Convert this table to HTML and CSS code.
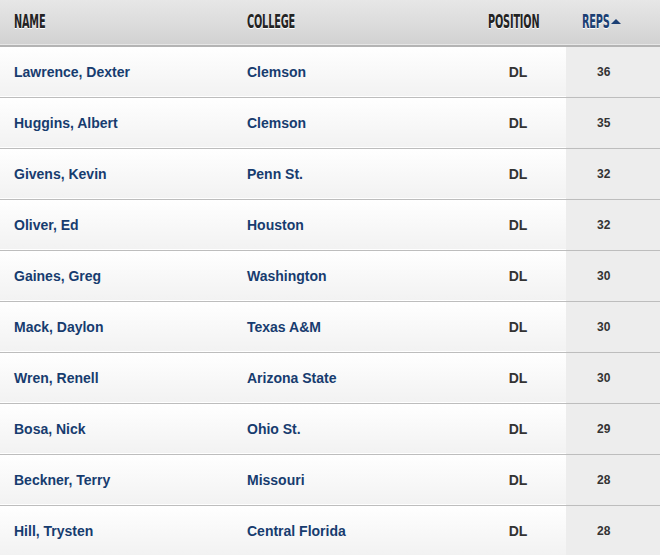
FILE: index.html
```html
<!DOCTYPE html>
<html>
<head>
<meta charset="utf-8">
<link rel="stylesheet" href="styles.css">
</head>
<body>
<table class="reps-table">
  <colgroup>
    <col class="c-name"><col class="c-college"><col class="c-pos"><col class="c-reps">
  </colgroup>
  <thead>
    <tr>
      <th class="h-name"><span class="hl">NAME</span></th>
      <th class="h-college"><span class="hl">COLLEGE</span></th>
      <th class="h-pos"><span class="hl">POSITION</span></th>
      <th class="h-reps"><span class="hl active">REPS</span><span class="caret"></span></th>
    </tr>
  </thead>
  <tbody>
    <tr><td class="name">Lawrence, Dexter</td><td class="college">Clemson</td><td class="pos">DL</td><td class="reps">36</td></tr>
    <tr><td class="name">Huggins, Albert</td><td class="college">Clemson</td><td class="pos">DL</td><td class="reps">35</td></tr>
    <tr><td class="name">Givens, Kevin</td><td class="college">Penn St.</td><td class="pos">DL</td><td class="reps">32</td></tr>
    <tr><td class="name">Oliver, Ed</td><td class="college">Houston</td><td class="pos">DL</td><td class="reps">32</td></tr>
    <tr><td class="name">Gaines, Greg</td><td class="college">Washington</td><td class="pos">DL</td><td class="reps">30</td></tr>
    <tr><td class="name">Mack, Daylon</td><td class="college">Texas A&amp;M</td><td class="pos">DL</td><td class="reps">30</td></tr>
    <tr><td class="name">Wren, Renell</td><td class="college">Arizona State</td><td class="pos">DL</td><td class="reps">30</td></tr>
    <tr><td class="name">Bosa, Nick</td><td class="college">Ohio St.</td><td class="pos">DL</td><td class="reps">29</td></tr>
    <tr><td class="name">Beckner, Terry</td><td class="college">Missouri</td><td class="pos">DL</td><td class="reps">28</td></tr>
    <tr><td class="name">Hill, Trysten</td><td class="college">Central Florida</td><td class="pos">DL</td><td class="reps">28</td></tr>
  </tbody>
</table>
</body>
</html>
```
FILE: styles.css
```css
html, body {
  margin: 0;
  padding: 0;
  background: #fff;
}
.reps-table {
  width: 660px;
  border-collapse: collapse;
  table-layout: fixed;
  font-family: "Liberation Sans", Arial, sans-serif;
}
.c-name { width: 247px; }
.c-college { width: 223px; }
.c-pos { width: 96px; }
.c-reps { width: 94px; }

thead tr {
  height: 46px;
  background: linear-gradient(to bottom, #e7e7e7 0%, #d2d2d2 100%);
  box-shadow: inset 0 -1px 0 #f4f4f4;
  border-bottom: 2px solid #b4b4b4;
}
th {
  padding: 0 0 4px 0;
  text-align: left;
  vertical-align: middle;
  font-weight: bold;
  white-space: nowrap;
}
.hl {
  display: inline-block;
  font-family: "DejaVu Sans Condensed", "Liberation Sans", sans-serif;
  font-stretch: condensed;
  font-size: 19px;
  font-weight: bold;
  color: #232323;
  text-shadow: 0 1px 0 #fff;
  transform: scaleX(0.57);
  transform-origin: left center;
  letter-spacing: -0.3px;
}
.hl.active { color: #1b3f74; }
.h-name { padding-left: 14px; }
.h-college { padding-left: 0; }
.h-pos { padding-left: 18px; }
.h-reps { padding-left: 16px; }
.caret {
  display: inline-block;
  width: 0;
  height: 0;
  border-left: 5px solid transparent;
  border-right: 5px solid transparent;
  border-bottom: 5px solid #1b3f74;
  margin-left: -19px;
  vertical-align: 4px;
}

tbody tr {
  height: 51px;
  border-bottom: 1px solid #bdbdbd;
  background: linear-gradient(to bottom, #ffffff 0%, #f2f2f2 100%);
}
td {
  padding: 0;
  vertical-align: middle;
  font-weight: bold;
  font-size: 14px;
  white-space: nowrap;
}
.name { padding-left: 14px; color: #173c6f; }
.college { color: #173c6f; }
.pos { text-align: center; color: #333; }
.reps {
  background: #ededed;
  color: #333;
  font-size: 12px;
  padding-left: 31px;
}
```
